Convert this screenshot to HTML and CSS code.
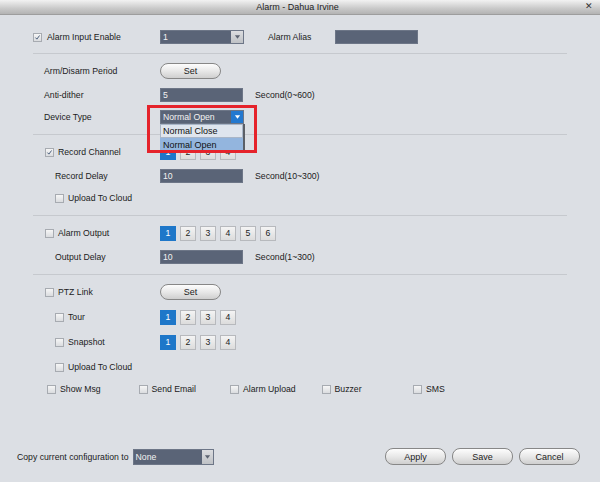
FILE: index.html
```html
<!DOCTYPE html>
<html lang="en">
<head>
  <meta charset="UTF-8">
  <title>Alarm - Dahua Irvine</title>
  <link rel="stylesheet" href="styles.css">
</head>
<body>

  <div class="window">
    <div class="titlebar">
      <span class="title">Alarm - Dahua Irvine</span>
      <span class="close">&#x2715;</span>
    </div>

    <div class="content">
      <div class="row first">
        <div class="lbl l0">
          <label class="chk wide"><span class="box checked"><svg viewBox="0 0 9 9"><path d="M1.8 4.6 L3.7 6.6 L7.2 1.9"/></svg></span>Alarm Input Enable</label>
        </div>
        <div class="select">
          <span class="sel-value">1</span>
          <span class="sel-arrow"><svg viewBox="0 0 8 6"><path d="M1 1 H7 L4 5 Z"/></svg></span>
        </div>
        <span class="alias-label">Alarm Alias</span>
        <span class="input alias"></span>
      </div>

      <div class="sep first-sep"></div>

      <div class="row">
        <div class="lbl l1">Arm/Disarm Period</div>
        <button type="button" class="pill">Set</button>
      </div>
      <div class="row gap2">
        <div class="lbl l1">Anti-dither</div>
        <span class="input">5</span>
        <span class="unit">Second(0~600)</span>
      </div>
      <div class="row">
        <div class="lbl l1">Device Type</div>
        <div class="select open">
          <span class="sel-value">Normal Open</span>
          <span class="sel-arrow"><svg viewBox="0 0 8 6"><path d="M1 1 H7 L4 5 Z"/></svg></span>
          <div class="sel-list">
            <div class="sel-item">Normal Close</div>
            <div class="sel-item active">Normal Open</div>
          </div>
          <div class="highlight"></div>
        </div>
      </div>

      <div class="sep"></div>

      <div class="row">
        <div class="lbl l1c">
          <label class="chk"><span class="box checked"><svg viewBox="0 0 9 9"><path d="M1.8 4.6 L3.7 6.6 L7.2 1.9"/></svg></span>Record Channel</label>
        </div>
        <div class="channels">
          <span class="ch on">1</span><span class="ch">2</span><span class="ch">3</span><span class="ch">4</span>
        </div>
      </div>
      <div class="row gap2">
        <div class="lbl l2">Record Delay</div>
        <span class="input">10</span>
        <span class="unit">Second(10~300)</span>
      </div>
      <div class="row">
        <div class="lbl l2">
          <label class="chk"><span class="box"></span>Upload To Cloud</label>
        </div>
      </div>

      <div class="sep"></div>

      <div class="row">
        <div class="lbl l1c">
          <label class="chk"><span class="box"></span>Alarm Output</label>
        </div>
        <div class="channels">
          <span class="ch on">1</span><span class="ch">2</span><span class="ch">3</span><span class="ch">4</span><span class="ch">5</span><span class="ch">6</span>
        </div>
      </div>
      <div class="row gap2">
        <div class="lbl l2">Output Delay</div>
        <span class="input">10</span>
        <span class="unit">Second(1~300)</span>
      </div>

      <div class="sep"></div>

      <div class="row">
        <div class="lbl l1c">
          <label class="chk"><span class="box"></span>PTZ Link</label>
        </div>
        <button type="button" class="pill">Set</button>
      </div>
      <div class="row gap3">
        <div class="lbl l2">
          <label class="chk"><span class="box"></span>Tour</label>
        </div>
        <div class="channels">
          <span class="ch on">1</span><span class="ch">2</span><span class="ch">3</span><span class="ch">4</span>
        </div>
      </div>
      <div class="row gap3">
        <div class="lbl l2">
          <label class="chk"><span class="box"></span>Snapshot</label>
        </div>
        <div class="channels">
          <span class="ch on">1</span><span class="ch">2</span><span class="ch">3</span><span class="ch">4</span>
        </div>
      </div>
      <div class="row gap3">
        <div class="lbl l2">
          <label class="chk"><span class="box"></span>Upload To Cloud</label>
        </div>
      </div>

      <div class="row actions">
        <label class="chk act"><span class="box"></span>Show Msg</label>
        <label class="chk act"><span class="box"></span>Send Email</label>
        <label class="chk act"><span class="box"></span>Alarm Upload</label>
        <label class="chk act"><span class="box"></span>Buzzer</label>
        <label class="chk act"><span class="box"></span>SMS</label>
      </div>
    </div>

    <div class="footer">
      <div class="copy">
        <span>Copy current configuration to</span>
        <div class="select small">
          <span class="sel-value">None</span>
          <span class="sel-arrow"><svg viewBox="0 0 8 6"><path d="M1 1 H7 L4 5 Z"/></svg></span>
        </div>
      </div>
      <div class="buttons">
        <button type="button" class="pill big">Apply</button>
        <button type="button" class="pill big">Save</button>
        <button type="button" class="pill big">Cancel</button>
      </div>
    </div>
  </div>

</body>
</html>
```

FILE: styles.css
```css
* {
  box-sizing: border-box;
}

body {
  margin: 0;
  padding: 0;
  font-family: 'Liberation Sans', Arial, sans-serif;
  font-size: 8.7px;
  color: #1b1b1b;
}

.window {
  width: 600px;
  height: 482px;
  background: #dcdfe4;
  display: flex;
  flex-direction: column;
}

.titlebar {
  height: 15px;
  display: flex;
  align-items: center;
  justify-content: center;
  position: relative;
  background: linear-gradient(to bottom, #f2f2f2, #c9c9c9 60%, #b3b3b3);
  border-bottom: 1px solid #9d9d9d;
  flex-shrink: 0;
}

.title {
  font-size: 9px;
  color: #222;
  margin-left: -5px;
}

.close {
  position: absolute;
  right: 7px;
  top: 1px;
  font-size: 9px;
  color: #333;
}

.content {
  flex: 1;
  padding-top: 11px;
}

.row {
  height: 22px;
  display: flex;
  align-items: center;
}

.row.gap2 { margin-top: 2px; }
.row.gap3 { margin-top: 3px; }

.sep {
  height: 1px;
  background: #c6c9ce;
  margin: 6px 0 6px 33px;
  width: 534px;
}

.sep.first-sep {
  margin-top: 5px;
}

.lbl {
  width: 160px;
  flex-shrink: 0;
  display: flex;
  align-items: center;
}

.l0 { padding-left: 33px; }
.l1 { padding-left: 44px; }
.l1c { padding-left: 45px; }
.l2 { padding-left: 55px; }

.chk {
  display: flex;
  align-items: center;
}

.box {
  width: 9px;
  height: 9px;
  margin-right: 4px;
  border: 1px solid #a7abb1;
  background: linear-gradient(to bottom, #f6f6f6, #dadcdf);
  display: inline-block;
  flex-shrink: 0;
}

.chk.wide .box {
  margin-right: 5px;
}

.box svg {
  display: block;
  width: 7px;
  height: 7px;
}

.box svg path {
  fill: none;
  stroke: #3f5573;
  stroke-width: 1.2;
}

.select {
  position: relative;
  width: 84px;
  height: 14px;
  display: flex;
  background: #5a6477;
  border: 1px solid #6d7687;
}

.sel-value {
  flex: 1;
  color: #f2f2f2;
  padding-left: 2px;
  line-height: 12px;
}

.sel-arrow {
  width: 12px;
  background: linear-gradient(to bottom, #dcdde0, #bfc2c6);
  display: flex;
  align-items: center;
  justify-content: center;
}

.sel-arrow svg {
  width: 7px;
  height: 6px;
}

.sel-arrow svg path {
  fill: #5c6371;
}

.select.open .sel-arrow {
  background: #2378cf;
}

.select.open .sel-arrow svg path {
  fill: #fff;
}

.sel-list {
  position: absolute;
  top: 13px;
  left: -1px;
  width: 85px;
  background: #dfe5ee;
  border-right: 2px solid #5b5f66;
  z-index: 2;
}

.sel-item {
  height: 14px;
  line-height: 13px;
  padding-left: 2px;
  color: #111;
  font-size: 9px;
  border: 1px solid #a9b6c8;
}

.sel-item.active {
  background: #93b5de;
  border-color: #93b5de;
}

.highlight {
  position: absolute;
  left: -14px;
  top: -6px;
  width: 110px;
  height: 48px;
  border: 3px solid #e5232b;
  z-index: 3;
}

.alias-label {
  margin-left: 24px;
}

.input {
  width: 83px;
  height: 14px;
  background: #5a6477;
  border: 1px solid #6d7687;
  color: #f2f2f2;
  padding-left: 2px;
  line-height: 12px;
}

.input.alias {
  margin-left: 24px;
}

.unit {
  margin-left: 12px;
}

.pill {
  width: 61px;
  height: 16px;
  padding: 0;
  border: 1px solid #878787;
  border-radius: 8px;
  background: linear-gradient(to bottom, #fdfdfd, #e8e8e8 50%, #cfcfcf);
  font-family: inherit;
  font-size: 9px;
  color: #1b1b1b;
}

.pill.big {
  height: 17px;
}

.channels {
  display: flex;
  gap: 4px;
}

.ch {
  width: 16px;
  height: 15px;
  border: 1px solid #b7b9bd;
  background: linear-gradient(to bottom, #f4f4f4, #dcdcdc);
  display: flex;
  align-items: center;
  justify-content: center;
  color: #222;
}

.ch.on {
  background: #1e77c9;
  border-color: #1e77c9;
  color: #fff;
}

.row.actions {
  padding-left: 47px;
}

.chk.act {
  width: 91.5px;
}

.footer {
  height: 34px;
  display: flex;
  justify-content: space-between;
  padding: 0 20px 17px 17px;
  flex-shrink: 0;
}

.copy {
  display: flex;
  align-items: center;
  gap: 4px;
}

.select.small {
  width: 81px;
  height: 16px;
}

.select.small .sel-value {
  line-height: 14px;
}

.select.small .sel-arrow {
  width: 11px;
}

.buttons {
  display: flex;
  align-items: center;
  gap: 6px;
}
```
